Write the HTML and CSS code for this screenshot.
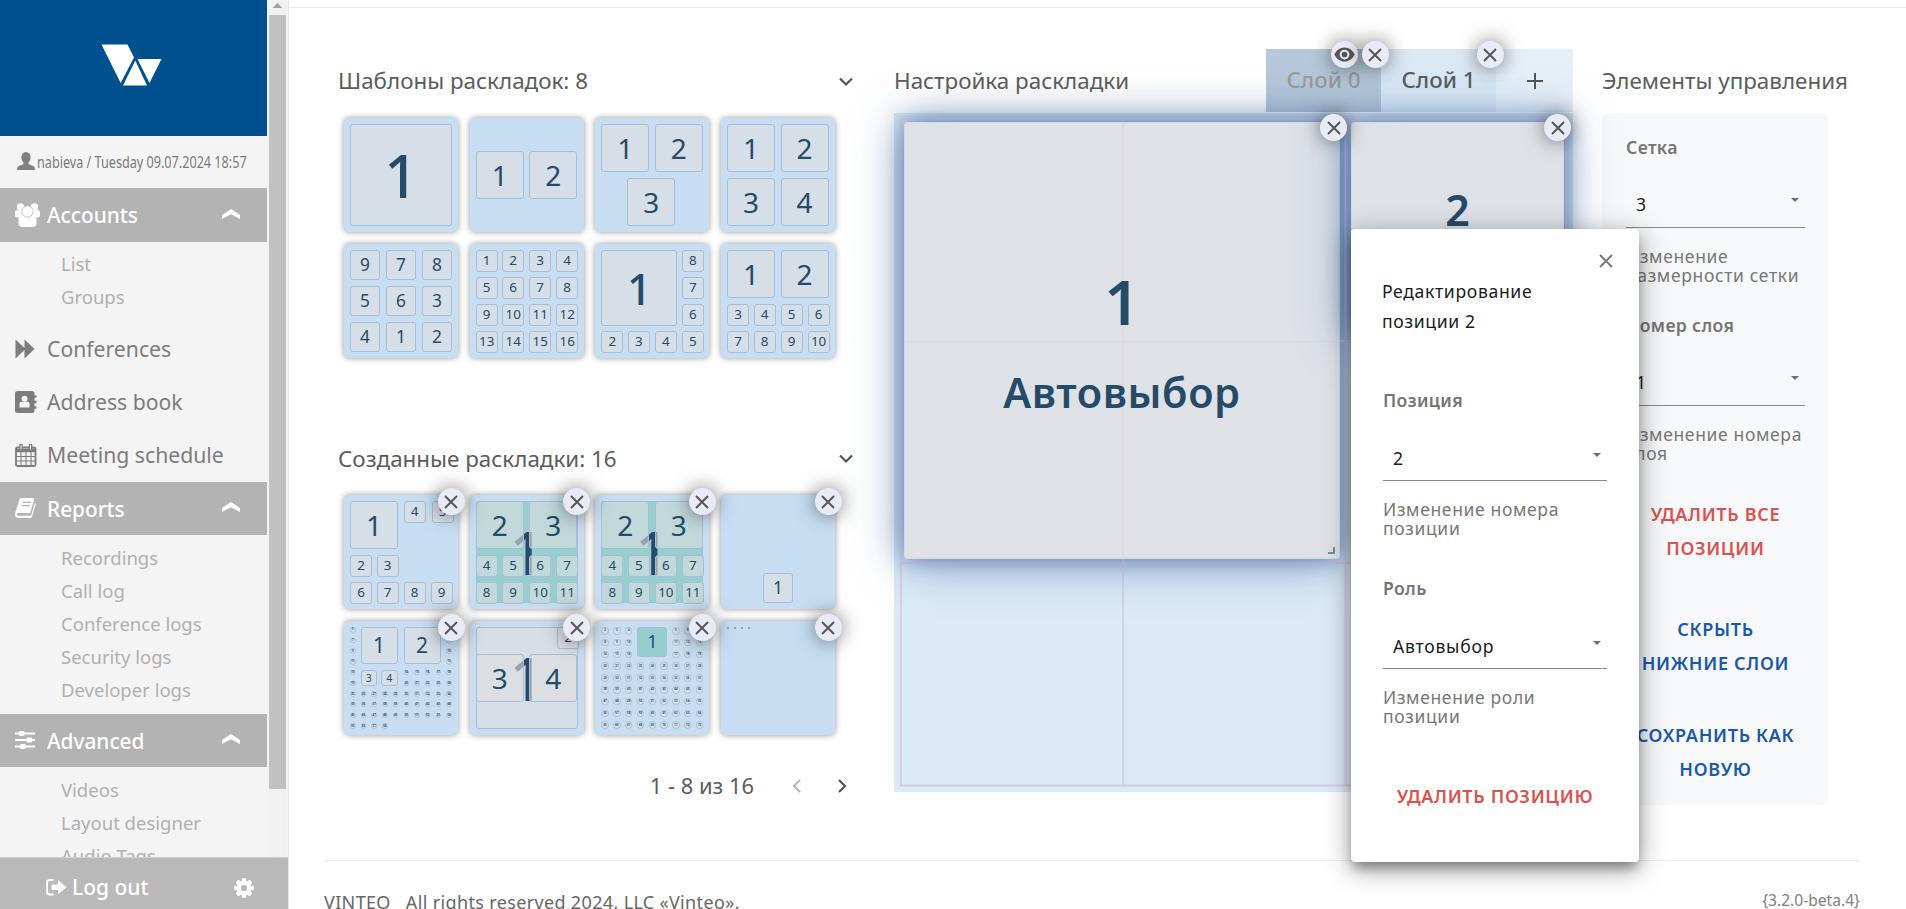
FILE: index.html
```html
<!DOCTYPE html>
<html lang="ru">
<head>
<meta charset="utf-8">
<title>Vinteo</title>
<link rel="stylesheet" href="styles.css">
</head>
<body>
<svg class="sprite" width="0" height="0">
  <symbol id="i-close" viewBox="0 0 14 14"><path d="M1 1L13 13M13 1L1 13" fill="none" stroke="currentColor" stroke-width="1.9"/></symbol>
  <symbol id="i-up" viewBox="0 0 18 10"><path d="M0 6L9 0L18 6V10L9 5.2L0 10Z" fill="currentColor"/></symbol>
  <symbol id="i-down" viewBox="0 0 14 10"><path d="M1 1.5L7 7.5L13 1.5" fill="none" stroke="currentColor" stroke-width="2.2"/></symbol>
  <symbol id="i-caret" viewBox="0 0 8 4"><path d="M0 0H8L4 4Z" fill="currentColor"/></symbol>
  <symbol id="i-eye" viewBox="0 0 22 16"><path d="M11 .5C6 .5 2 3.700 .3 8C2 12.300 6 15.500 11 15.500S20 12.300 21.700 8C20 3.700 16 .5 11 .5Z" fill="#555"/><circle cx="11" cy="8" r="5.200" fill="#e8eaf6"/><circle cx="11" cy="8" r="3" fill="#555"/></symbol>
</svg>
<div class="app">
  <aside class="sidebar">
    <div class="scroll">
      <nav class="menu">
        <div class="logo">
          <svg width="62" height="42" viewBox="0 0 62 42" fill="#fff"><path d="M.5.5H26.500L33 13.500L19.700 39Z"/><path d="M36.500 15H60.500L48.500 39Z"/><path d="M34.300 16.500L46 41.500H22Z"/></svg>
        </div>
        <div class="user">
          <svg width="18" height="18" viewBox="0 0 18 18" fill="#808080"><ellipse cx="9" cy="5.500" rx="4.600" ry="5.500"/><path d="M6.500 9H11.500V12L16.500 14.300Q18 15 18 18H0Q0 15 1.500 14.300L6.500 12Z"/></svg>
          <span class="user-text">nabieva / Tuesday 09.07.2024 18:57</span>
        </div>
        <div class="item head first">
          <svg class="ico" width="25" height="24" viewBox="0 0 25 24" fill="#fff"><circle cx="5.500" cy="4" r="3.700"/><circle cx="19.500" cy="4" r="3.700"/><rect x="0" y="7" width="8" height="7.500" rx="2.500"/><rect x="17" y="7" width="8" height="7.500" rx="2.500"/><rect x="3.500" y="12.500" width="18" height="11.500" rx="4"/><circle cx="12.500" cy="8.500" r="5.700" stroke="#b3b3b3" stroke-width=".8"/></svg>
          <span>Accounts</span><svg class="up" width="18" height="10"><use href="#i-up"/></svg>
        </div>
        <ul class="sub sub-a"><li>List</li><li>Groups</li></ul>
        <div class="item">
          <svg class="ico" width="20" height="20" viewBox="0 0 20 20" fill="#7d7d7d"><path d="M.5 .5L9.500 9V.5L19.500 10L9.500 19.500V11L.5 19.500Z"/></svg>
          <span>Conferences</span>
        </div>
        <div class="item">
          <svg class="ico" width="22" height="22" viewBox="0 0 22 22"><rect x="0" y="0" width="19.500" height="22" rx="2.500" fill="#7d7d7d"/><path d="M18 5.500H21.500M18 11H21.500M18 16.500H21.500" stroke="#7d7d7d" stroke-width="2.600"/><circle cx="9.500" cy="7.800" r="3" fill="#f4f4f4"/><path d="M4.500 16.500V13Q4.500 10.800 6.700 10.800H12.300Q14.500 10.800 14.500 13V16.500Z" fill="#f4f4f4"/></svg>
          <span>Address book</span>
        </div>
        <div class="item">
          <svg class="ico" width="22" height="23" viewBox="0 0 22 23" fill="none" stroke="#7d7d7d"><rect x="1" y="3.500" width="19.500" height="18.500" rx="1.500" stroke-width="1.800"/><path d="M1 6.500H20.500" stroke-width="3.500"/><path d="M1 12.500H20.500M1 17H20.500M6 8V22M11 8V22M16 8V22" stroke-width="1.100"/><path d="M6 0V6M15.500 0V6" stroke-width="3.400"/><path d="M6 1V5.500M15.500 1V5.500" stroke="#f4f4f4" stroke-width="1"/></svg>
          <span>Meeting schedule</span>
        </div>
        <div class="item head low">
          <svg class="ico" width="21" height="20" viewBox="0 0 21 20"><path d="M6.500 0H17.500Q19.500 0 19 2L15.200 15H3.500Q1.500 15 1.800 16.500Q2 17.800 3.500 17.800H16L20 4.500Q21 5.200 20.700 6.500L17 18.500Q16.500 20 15 20H3Q0 19.500 0 16.500Q0 15.500 .5 14L4.300 1.800Q5 0 6.500 0Z" fill="#fff"/><path d="M8 4.300H16M7 7.600H15" stroke="#b3b3b3" stroke-width="1.200"/></svg>
          <span>Reports</span><svg class="up" width="18" height="10"><use href="#i-up"/></svg>
        </div>
        <ul class="sub"><li>Recordings</li><li>Call log</li><li>Conference logs</li><li>Security logs</li><li>Developer logs</li></ul>
        <div class="item head low">
          <svg class="ico" width="20" height="18" viewBox="0 0 20 18" fill="#fff"><path d="M0 1.500H20V3.500H0ZM0 8H20V10H0ZM0 14.500H20V16.500H0Z"/><rect x="4" y="0" width="5.500" height="5" rx="1"/><rect x="11.500" y="6.500" width="5.500" height="5" rx="1"/><rect x="5" y="13" width="5.500" height="5" rx="1"/></svg>
          <span>Advanced</span><svg class="up" width="18" height="10"><use href="#i-up"/></svg>
        </div>
        <ul class="sub"><li>Videos</li><li>Layout designer</li><li>Audio Tags</li></ul>
      </nav>
      <div class="scrollbar">
        <svg width="19" height="15" viewBox="0 0 19 15"><path d="M4.500 8L9.500 3L14.500 8Z" fill="#a3a3a3"/></svg>
        <div class="thumb"></div>
      </div>
    </div>
    <div class="logout">
      <svg width="21" height="17" viewBox="0 0 21 17"><path d="M7.500 1H4Q1 1 1 4V12.500Q1 15.500 4 15.500H7.500" fill="none" stroke="#fff" stroke-width="2"/><path d="M5.500 5.500H12V1L20.500 8.300L12 15.500V11H5.500Z" fill="#fff"/></svg>
      <span>Log out</span>
      <svg class="gear" width="20" height="20" viewBox="-10 -10 20 20" fill="#fff"><g><rect x="-2.200" y="-9.800" width="4.400" height="19.600" rx=".8"/><rect x="-2.200" y="-9.800" width="4.400" height="19.600" rx=".8" transform="rotate(45)"/><rect x="-2.200" y="-9.800" width="4.400" height="19.600" rx=".8" transform="rotate(90)"/><rect x="-2.200" y="-9.800" width="4.400" height="19.600" rx=".8" transform="rotate(135)"/></g><circle r="7.300"/><circle r="3.100" fill="#b9b9b9"/></svg>
    </div>
  </aside>

  <main class="main">
    <div class="columns">
      <section class="col-lib">
        <header class="col-head"><span>Шаблоны раскладок: 8</span><svg width="14" height="10"><use href="#i-down"/></svg></header>
        <div class="tiles" id="templates"></div>
        <header class="col-head created-head"><span>Созданные раскладки: 16</span><svg width="14" height="10"><use href="#i-down"/></svg></header>
        <div class="tiles" id="created"></div>
        <div class="pager"><span>1 - 8 из 16</span>
          <svg class="prev" width="9" height="14" viewBox="0 0 9 14"><path d="M8 1L2 7L8 13" fill="none" stroke="#b9b9b9" stroke-width="2.200"/></svg>
          <svg width="9" height="14" viewBox="0 0 9 14"><path d="M1 1L7 7L1 13" fill="none" stroke="#555" stroke-width="2.200"/></svg>
        </div>
      </section>

      <section class="col-edit">
        <header class="edit-head">
          <span>Настройка раскладки</span>
          <div class="tabs">
            <div class="tab tab-off">Слой 0<i class="badge b-eye"><svg width="21" height="15"><use href="#i-eye"/></svg></i><i class="badge b-tab"><svg width="14" height="14"><use href="#i-close"/></svg></i></div>
            <div class="tab">Слой 1<i class="badge b-tab"><svg width="14" height="14"><use href="#i-close"/></svg></i></div>
            <div class="tab tab-add"><svg width="16" height="16" viewBox="0 0 16 16"><path d="M8 0V16M0 8H16" stroke="#555" stroke-width="2"/></svg></div>
          </div>
        </header>
        <div class="board">
          <div class="pos pos-1"><b class="n1">1</b><b class="role">Автовыбор</b><i class="badge b-pos"><svg width="14" height="14"><use href="#i-close"/></svg></i><i class="grip"></i></div>
          <div class="pos pos-2"><b class="n2">2</b><i class="badge b-pos"><svg width="14" height="14"><use href="#i-close"/></svg></i></div>
          <svg class="lines" width="679" height="679" viewBox="0 0 679 679"><path d="M7 6V673M229 6V9M229 446V673M451.500 6V673M672.500 6V673M6 6H673M446 228H457M6 450H673M6 672.500H673"/></svg>
        </div>
      </section>

      <section class="col-ctl">
        <header class="col-head"><span>Элементы управления</span></header>
        <div class="controls">
          <div class="label">Сетка</div>
          <div class="select"><span>3</span><svg width="8" height="4"><use href="#i-caret"/></svg></div>
          <div class="hint">Изменение<br>размерности сетки</div>
          <div class="label label-2">Номер слоя</div>
          <div class="select"><span>1</span><svg width="8" height="4"><use href="#i-caret"/></svg></div>
          <div class="hint">Изменение номера<br>слоя</div>
          <div class="btn red">УДАЛИТЬ ВСЕ<br>ПОЗИЦИИ</div>
          <div class="btn b2">СКРЫТЬ<br>НИЖНИЕ СЛОИ</div>
          <div class="btn b3">СОХРАНИТЬ КАК<br>НОВУЮ</div>
        </div>
      </section>
    </div>
    <footer class="footer"><span>VINTEO &nbsp; All rights reserved 2024, LLC «Vinteo».</span><span class="ver">{3.2.0-beta.4}</span></footer>
  </main>

  <div class="dialog">
    <svg class="d-close" width="14" height="14"><use href="#i-close"/></svg>
    <div class="d-title">Редактирование<br>позиции 2</div>
    <div class="label">Позиция</div>
    <div class="select"><span>2</span><svg width="8" height="4"><use href="#i-caret"/></svg></div>
    <div class="hint">Изменение номера<br>позиции</div>
    <div class="label label-2">Роль</div>
    <div class="select"><span>Автовыбор</span><svg width="8" height="4"><use href="#i-caret"/></svg></div>
    <div class="hint">Изменение роли<br>позиции</div>
    <div class="btn red">УДАЛИТЬ ПОЗИЦИЮ</div>
  </div>
</div>
<script src="layouts.js"></script>
</body>
</html>
```
FILE: styles.css
```css
* { box-sizing: border-box; }
body { margin: 0; overflow: hidden; background: #fff; color: #5c5c5c; font-family: "Noto Sans", "Open Sans", sans-serif; }
.sprite { position: absolute; }
.app { position: relative; display: flex; width: 1906px; height: 909px; overflow: hidden; }
svg { display: block; flex: none; }
i { font-style: normal; }

/* sidebar */
.sidebar { position: relative; z-index: 5; width: 289px; height: 909px; flex: none; border-right: 1px solid #e3e3e3; background: #f4f4f4; display: flex; flex-direction: column; }
.scroll { height: 857px; display: flex; overflow: hidden; flex: none; }
.menu { width: 267px; flex: none; }
.logo { height: 136px; background: #00508f; padding: 44px 0 0 101px; }
.user { height: 52px; padding: 0 0 0 17px; display: flex; align-items: center; gap: 2px; color: #7a7a7a; }
.user svg { margin-top: -3px; }
.user-text { font-size: 17px; line-height: 24px; margin-top: -1px; white-space: nowrap; transform: scaleX(.743); transform-origin: 0 50%; width: 208px; }
.item { height: 53px; display: grid; grid-template-columns: 32px 1fr 45px; align-items: center; padding-left: 15px; font-size: 21.2px; color: #7d7d7d; }
.item span { white-space: nowrap; margin-top: -2px; }
.head { background: #b3b3b3; color: #fff; font-weight: 500; font-size: 20.800px; }
.head span { margin-top: 0; }
.head.low span { margin-top: 1px; }
.head.first { height: 54px; }
.up { margin-top: -2px; }
.sub { list-style: none; margin: 0; padding: 6px 0 8px 61px; font-size: 18.500px; color: #b0b0b0; }
.sub-a { padding: 5px 0 9.500px 61px; }
.sub li { height: 33px; line-height: 33px; white-space: nowrap; }
.scrollbar { width: 19px; margin-left: 1px; background: #f1f1f1; display: flex; flex-direction: column; align-items: center; }
.thumb { width: 17px; height: 774px; background: #c1c1c1; }
.logout { height: 52px; background: #b9b9b9; border-top: 1px solid #d0d0d0; color: #fff; display: flex; align-items: center; padding: 8px 34px 0 46px; font-size: 21px; font-weight: 500; }
.logout span { margin: -2px 0 0 5px; flex: 1; }

/* main area */
.main { flex: 1; margin-top: 7px; border-top: 1px solid #ebebeb; }
.columns { display: flex; height: 852px; padding: 42px 0 0 49px; }
.col-lib { width: 522px; }
.col-head { height: 63px; display: flex; align-items: center; justify-content: space-between; font-size: 22.400px; padding-right: 7px; white-space: nowrap; }
.col-head span, .edit-head > span { margin-top: -2px; }
.col-head svg { color: #555; }
.tiles { padding: 5px 0 0 6px; display: grid; grid-template-columns: repeat(4, 114px); gap: 12px 11.700px; }
.created-head { margin-top: 70px; height: 62px; }
.tile { position: relative; height: 114px; border-radius: 5px; background: #c7def2; box-shadow: 0 0 6px rgba(0,0,0,.42); }
.cell { position: absolute; display: flex; align-items: center; justify-content: center; border: 1px solid #a9bed4; border-radius: 3px; background: rgba(224,224,224,.6); color: #264a69; line-height: 1; }
.cell.teal { background: #97cfd0; }
.dot { border-radius: 50%; font-size: 2.800px; font-weight: 700; }
.speck { border: 0; background: #7d99b2; border-radius: 50%; }
.badge { position: absolute; z-index: 2; width: 27px; height: 27px; border-radius: 50%; background: #e8eaf6; color: #555; display: flex; align-items: center; justify-content: center; box-shadow: 0 0 20px rgba(0,0,0,.55); }
.b-tile { right: -6.500px; top: -7px; }
.pager { display: flex; align-items: center; justify-content: flex-end; height: 34px; margin-top: 34px; padding-right: 13px; font-size: 21.900px; }
.pager span { margin-top: -2px; }
.pager .prev { margin: 0 37px 0 38px; }

/* layout editor */
.col-edit { width: 679px; margin-left: 34px; font-size: 22.400px; }
.edit-head { height: 63px; display: flex; justify-content: space-between; align-items: center; white-space: nowrap; }
.tabs { display: flex; height: 65px; }
.tab { position: relative; width: 115px; height: 63px; background: #dbe9f6; font-weight: 500; font-size: 22.400px; line-height: 62px; text-align: center; }
.tab-off { background: #b6c8d9; color: #9c9c9c; }
.tab-add { width: 77px; background: #e6f0f9; display: flex; align-items: center; justify-content: center; }
.b-eye { right: 23.500px; top: -8px; }
.b-tab { right: -7.500px; top: -8px; }
.board { position: relative; height: 679px; background: #dceaf7; }
.pos { position: absolute; border-radius: 3px; color: #264a69; text-align: center; border: 1px solid #cfdbe8; box-shadow: 0 0 50px rgba(35,80,140,.55), 0 0 22px rgba(40,85,150,.55); }
.pos-1 { left: 10px; top: 9px; width: 436px; height: 437px; background: linear-gradient(#dfd8df, #dfd8df) 217px 0 / 2px 100% no-repeat, linear-gradient(#dfd8df, #dfd8df) 0 218px / 100% 1px no-repeat, #dee2e7; }
.pos-2 { left: 457px; top: 9px; width: 213px; height: 213px; background: #dee2e7; }
.lines { position: absolute; left: 0; top: 0; fill: none; stroke: rgba(205,165,205,.45); stroke-width: 1.800; }
.pos b { display: block; line-height: 1; font-weight: 600; }
.n1 { font-size: 62px; padding-top: 147px; }
.pos .role { font-size: 41.500px; font-weight: 600; letter-spacing: .6px; padding-top: 40px; }
.n2 { font-size: 43px; padding-top: 65px; }
.b-pos { right: -8px; top: -9px; z-index: 3; }
.grip { position: absolute; right: 4px; bottom: 4px; width: 7px; height: 7px; border-right: 2px solid #888; border-bottom: 2px solid #888; }

/* controls */
.col-ctl { margin-left: 29px; width: 247px; }
.controls { width: 226px; height: 692px; background: #f6f8fa; border-radius: 7px; padding: 20px 23px 0 24px; }
.label { font-size: 17.600px; font-weight: 600; letter-spacing: .35px; line-height: 28px; color: #757575; white-space: nowrap; }
.select { height: 50px; margin-top: 17px; padding: 0 6px 0 10px; border-bottom: 1px solid #8a8a8a; display: flex; justify-content: space-between; font-size: 17.600px; letter-spacing: .75px; line-height: 53px; color: #1c1c1c; }
.select svg { color: #6f6f6f; margin-top: 20px; }
.hint { margin-top: 19px; font-size: 17.500px; letter-spacing: .65px; line-height: 19.400px; color: #777; white-space: nowrap; }
.label-2 { margin-top: 25px; }
.btn { text-align: center; font-size: 18px; font-weight: 600; letter-spacing: .7px; line-height: 34px; color: #1c58ab; white-space: nowrap; }
.btn.red { color: #db524f; }
.controls .btn { margin-left: -8px; margin-right: -8px; }
.controls .red { margin-top: 33px; }
.b2 { margin-top: 47px; }
.b3 { margin-top: 38px; }

.footer { margin: 0 46px 0 35px; border-top: 1px solid #ececec; display: flex; justify-content: space-between; font-size: 18px; letter-spacing: .35px; color: #666; padding-top: 27px; line-height: 28px; white-space: nowrap; }
.ver { font-size: 15.600px; letter-spacing: 0; color: #808080; line-height: 25px; }

/* position dialog */
.dialog { position: absolute; z-index: 10; left: 1351px; top: 229px; width: 288px; height: 633px; background: #fff; border-radius: 4px; box-shadow: 0 8px 12px -3px rgba(0,0,0,.35), 0 6px 26px 2px rgba(0,0,0,.35); padding: 48px 32px 0 32px; }
.d-close { position: absolute; right: 26px; top: 24.500px; color: #777; }
.d-title { font-size: 17.600px; letter-spacing: .65px; line-height: 29.500px; color: #1c1c1c; white-space: nowrap; margin-left: -1px; }
.dialog .label { margin-top: 50px; }
.dialog .select { margin-top: 16px; height: 51px; line-height: 56px; }
.dialog .select svg { margin-top: 23px; }
.dialog .label-2 { margin-top: 35px; }
.dialog .btn { margin-top: 52px; }
```
FILE: layouts.js
```js
// Cell geometry inside a 114px layout tile
const P = [6, 32.5, 59.5, 86.5];
const FONT = s => s > 90 ? 59 : s > 70 ? 43 : s > 45 ? 28 : s > 35 ? 21 : s > 28 ? 17.3 : s > 20 ? 13.4 : 10;

function cell(tile, x, y, s, label, cls) {
  const d = document.createElement('div');
  d.className = 'cell' + (cls ? ' ' + cls : '');
  d.style.cssText = `left:${x}px;top:${y}px;width:${s}px;height:${s}px`;
  if (!/dot|speck/.test(cls || '')) {
    d.style.fontSize = FONT(s) + 'px';
    if (s > 70) d.style.fontWeight = 500;
  }
  d.textContent = label;
  tile.appendChild(d);
}
const row = (t, y, labels) => labels.forEach((l, i) => cell(t, P[i], P[y], 22, l));

const templates = [
  t => cell(t, 6, 6, 102, 1),
  t => { cell(t, 6, 33, 48, 1); cell(t, 59.5, 33, 48, 2); },
  t => { cell(t, 6, 6, 48, 1); cell(t, 59.5, 6, 48, 2); cell(t, 32, 60, 48, 3); },
  t => { cell(t, 6, 6, 48, 1); cell(t, 59.5, 6, 48, 2); cell(t, 6, 60, 48, 3); cell(t, 59.5, 60, 48, 4); },
  t => [9, 7, 8, 5, 6, 3, 4, 1, 2].forEach((n, i) => cell(t, 6 + i % 3 * 36, 6 + (i / 3 | 0) * 36, 30, n)),
  t => [0, 1, 2, 3].forEach(r => row(t, r, [1, 2, 3, 4].map(n => n + r * 4))),
  t => { cell(t, 6, 6, 76, 1); cell(t, P[3], P[0], 22, 8); cell(t, P[3], P[1], 22, 7); cell(t, P[3], P[2], 22, 6); row(t, 3, [2, 3, 4, 5]); },
  t => { cell(t, 6, 6, 48, 1); cell(t, 59.5, 6, 48, 2); row(t, 2, [3, 4, 5, 6]); row(t, 3, [7, 8, 9, 10]); }
];

function teal(t) {
  cell(t, 6, 6, 102, 1, 'teal');
  cell(t, 6, 6, 48, 2); cell(t, 59.5, 6, 48, 3);
  row(t, 2, [4, 5, 6, 7]); row(t, 3, [8, 9, 10, 11]);
}
const created = [
  t => {
    cell(t, 6, 6, 48, 1); cell(t, P[2], 6, 22, 4); cell(t, P[3] + 1, 6, 22, 5);
    row(t, 2, [2, 3]); row(t, 3, [6, 7, 8, 9]);
  },
  teal,
  teal,
  t => cell(t, 42, 77.5, 30, 1),
  t => {
    cell(t, 16.5, 6, 37, 1); cell(t, 59.5, 6, 37, 2);
    cell(t, 16.5, 48.5, 16.5, 3); cell(t, 37, 48.5, 16.5, 4);
    let n = 5;
    for (let r = 0; r < 10; r++) for (let c = 0; c < 10; c++) {
      if (r < 4 && c > 0 && c < 9) continue;
      if ((r === 4 || r === 5) && c > 0 && c < 5) continue;
      if (r === 9 && c > 3) continue;
      cell(t, 6 + c * 10.7, 6 + r * 10.7, 5.5, n++, 'dot');
    }
  },
  t => { cell(t, 6, 6, 102, 1); cell(t, 87.5, 6, 22, 2); cell(t, 6, 33, 48, 3); cell(t, 59.5, 33, 48, 4); },
  t => {
    cell(t, 42, 6, 30, 1, 'teal');
    let n = 2;
    for (let r = 0; r < 9; r++) for (let c = 0; c < 9; c++) {
      if (r < 3 && c > 2 && c < 6) continue;
      cell(t, 6 + c * 11.8, 6 + r * 11.8, 7.5, n++, 'dot');
    }
  },
  t => [0, 1, 2, 3].forEach(i => cell(t, 6 + i * 7, 6, 1.6, '', 'speck'))
];

function build(id, list, closable) {
  const box = document.getElementById(id);
  list.forEach(draw => {
    const t = document.createElement('div');
    t.className = 'tile';
    draw(t);
    if (closable) t.insertAdjacentHTML('beforeend', '<i class="badge b-tile"><svg width="14" height="14"><use href="#i-close"/></svg></i>');
    box.appendChild(t);
  });
}
build('templates', templates, false);
build('created', created, true);
```
